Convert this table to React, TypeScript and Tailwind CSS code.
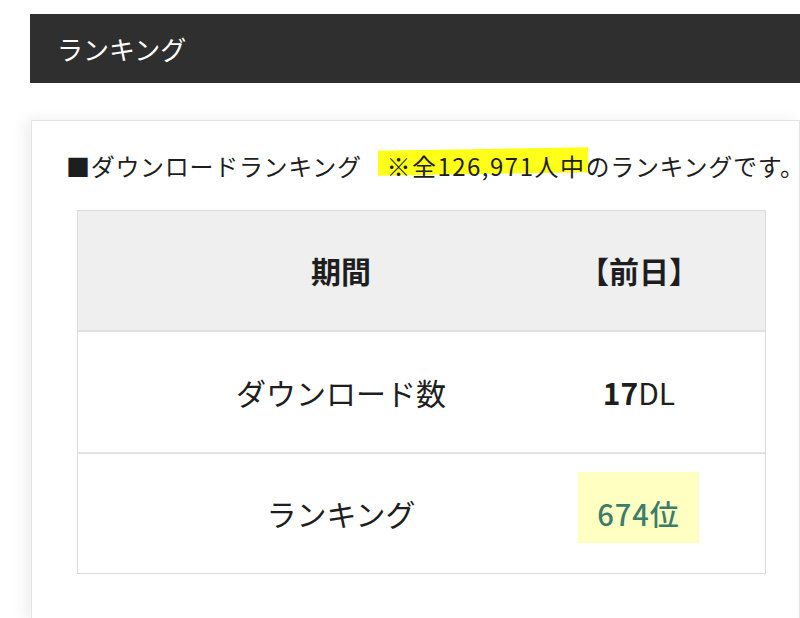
export default function App() {
  const font = "font-['Noto_Sans_CJK_JP','Noto_Sans',sans-serif]";

  return (
    <div className={`min-h-[618px] bg-white pt-[14px] pl-[30px] text-[#1e1e1e] ${font}`}>
      {/* Title bar */}
      <div className="flex h-[69px] items-center bg-[#2f2f2f] pl-[27px] text-[26px] text-white">
        ランキング
      </div>

      {/* Panel */}
      <div className="mt-[37px] ml-px h-[500px] border border-[#e4e4e4] pt-[27px] pl-[34px] shadow-[-6px_0_14px_rgba(0,0,0,0.07)]">
        <p className="whitespace-nowrap text-[24px] leading-[36px] tracking-[0.7px]">
          {"■ダウンロードランキング　"}
          <span className="relative">
            <span className="absolute top-[1px] left-[-8px] right-[-3px] h-[25px] -skew-y-1 bg-[#ffff1a]" />
            <span className="relative tracking-[1.5px]">※全126,971人中</span>
          </span>
          のランキングです。
        </p>

        {/* Table */}
        <div className="mt-[26px] ml-[11px] w-[689px] border border-[#dadada] text-[30px]">
          <div className="grid h-[121px] grid-cols-[500px_122px_1fr] items-center border-b-2 border-[#e2e2e2] bg-[#efefef] font-bold">
            <div className="pl-[26px] text-center">期間</div>
            <div className="text-center">【前日】</div>
            <div />
          </div>
          <div className="grid h-[122px] grid-cols-[500px_122px_1fr] items-center border-b-2 border-[#e2e2e2]">
            <div className="pl-[26px] text-center">ダウンロード数</div>
            <div className="text-center">
              <span className="font-bold">17</span>DL
            </div>
            <div />
          </div>
          <div className="grid h-[119px] grid-cols-[500px_122px_1fr] items-center">
            <div className="pl-[26px] text-center">ランキング</div>
            <div className="mt-[18px] flex h-[71px] w-[121px] items-center justify-center self-start bg-[#ffffc2] pt-[12px] text-[29px] font-medium tracking-[1px] text-[#3b7c6c]">
              674位
            </div>
            <div />
          </div>
        </div>
      </div>
    </div>
  );
}
